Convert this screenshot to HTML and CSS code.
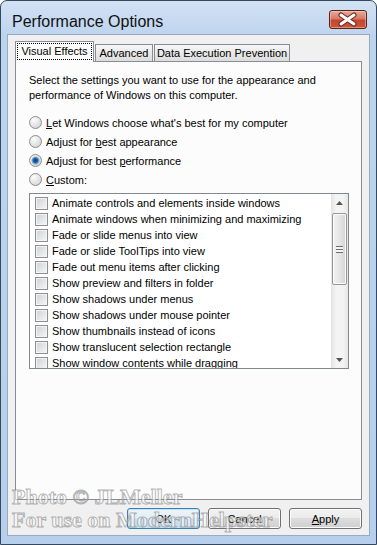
FILE: index.html
```html
<!DOCTYPE html>
<html lang="en">
<head>
    <meta charset="UTF-8">
    <title>Performance Options</title>
    <link rel="stylesheet" href="styles.css">
</head>
<body>
    <div class="window">
        <div class="titlebar">
            <span class="title">Performance Options</span>
            <span class="close">
                <svg width="36" height="17" viewBox="0 0 36 17">
                    <path d="M11 4 L24 13 M24 4 L11 13" stroke="#6e2418" stroke-width="5" stroke-linecap="round"/>
                    <path d="M11 4 L24 13 M24 4 L11 13" stroke="#fff" stroke-width="3" stroke-linecap="round"/>
                </svg>
            </span>
        </div>

        <div class="client">
            <div class="tabs">
                <div class="tab active"><span class="focus">Visual Effects</span></div>
                <div class="tab tab-adv">Advanced</div>
                <div class="tab tab-dep">Data Execution Prevention</div>
            </div>

            <div class="panel">
                <p class="intro">Select the settings you want to use for the appearance and<br>performance of Windows on this computer.</p>

                <div class="options">
                    <div class="radio-row"><span class="radio"></span><span><u>L</u>et Windows choose what's best for my computer</span></div>
                    <div class="radio-row"><span class="radio"></span><span>Adjust for <u>b</u>est appearance</span></div>
                    <div class="radio-row"><span class="radio on"></span><span>Adjust for best <u>p</u>erformance</span></div>
                    <div class="radio-row"><span class="radio"></span><span><u>C</u>ustom:</span></div>
                </div>

                <div class="listbox">
                    <ul class="items" id="effects"></ul>
                    <div class="scrollbar">
                        <div class="arrow">
                            <svg width="7" height="4" viewBox="0 0 7 4"><path d="M0 4 L3.5 0 L7 4 Z" fill="#555"/></svg>
                        </div>
                        <div class="track">
                            <div class="thumb"><span class="grip"></span></div>
                        </div>
                        <div class="arrow">
                            <svg width="7" height="4" viewBox="0 0 7 4"><path d="M0 0 L3.5 4 L7 0 Z" fill="#555"/></svg>
                        </div>
                    </div>
                </div>
            </div>

            <div class="buttons">
                <button class="btn default">OK</button>
                <button class="btn">Cancel</button>
                <button class="btn"><u>A</u>pply</button>
            </div>
        </div>

        <div class="watermark">Photo © JLMeller<br>For use on ModernHelpster</div>
    </div>

    <script>
        const effects = [
            "Animate controls and elements inside windows",
            "Animate windows when minimizing and maximizing",
            "Fade or slide menus into view",
            "Fade or slide ToolTips into view",
            "Fade out menu items after clicking",
            "Show preview and filters in folder",
            "Show shadows under menus",
            "Show shadows under mouse pointer",
            "Show thumbnails instead of icons",
            "Show translucent selection rectangle",
            "Show window contents while dragging"
        ];

        const list = document.getElementById('effects');
        effects.forEach(name => {
            list.innerHTML += `<li><span class="check"></span><span>${name}</span></li>`;
        });
    </script>
</body>
</html>
```

FILE: styles.css
```css
body {
    margin: 0;
    font-family: "Liberation Sans", Arial, sans-serif;
    font-size: 11px;
    color: #000;
}
.window {
    position: relative;
    width: 377px;
    height: 545px;
    box-sizing: border-box;
    border: 1px solid #34495f;
    border-radius: 7px 7px 0 0;
    padding: 0 6px 8px 6px;
    background: linear-gradient(#d3e2f4, #bed4ee 34px, #b7cfec);
    display: flex;
    flex-direction: column;
}
.titlebar {
    height: 33px;
    display: flex;
    justify-content: space-between;
    align-items: flex-start;
}
.title {
    margin: 13px 0 0 5px;
    font-size: 16px;
    line-height: 16px;
    color: #111;
}
.close {
    margin: 9px 3px 0 0;
    width: 36px;
    height: 17px;
    border: 1px solid #5e2016;
    border-radius: 3px;
    background: linear-gradient(#e3ab9c, #d57b66 45%, #c5462c 55%, #c9573b);
    box-shadow: inset 0 0 0 1px rgba(255, 220, 210, 0.45);
}
.close svg {
    display: block;
}
.client {
    flex: 1;
    background: #f0f0f0;
    border: 1px solid #98abc3;
    padding: 6px 7px 6px 7px;
    display: flex;
    flex-direction: column;
}
.tabs {
    height: 20px;
    display: flex;
    align-items: flex-end;
    gap: 1px;
}
.tab {
    height: 17px;
    box-sizing: border-box;
    border: 1px solid #898c95;
    border-bottom: none;
    background: linear-gradient(#f7f7f7, #e9e9e9 50%, #dcdcdc);
    text-align: center;
    line-height: 16px;
}
.tab-adv {
    width: 58px;
}
.tab-dep {
    width: 136px;
}
.tab.active {
    width: 79px;
    height: 21px;
    margin-bottom: -1px;
    padding: 1px;
    background: #fcfcfc;
    position: relative;
    z-index: 1;
}
.focus {
    display: block;
    height: 17px;
    box-sizing: border-box;
    border: 1px dotted #000;
    line-height: 15px;
}
.panel {
    height: 439px;
    box-sizing: border-box;
    border: 1px solid #898c95;
    background: #fcfcfc;
    padding: 11px 12px 0 13px;
}
.intro {
    margin: 0 0 10px 0;
    line-height: 15px;
}
.radio-row {
    height: 19px;
    display: flex;
    align-items: center;
    gap: 4px;
}
.radio {
    width: 13px;
    height: 13px;
    box-sizing: border-box;
    border-radius: 50%;
    border: 1px solid #8c8e90;
    background: radial-gradient(circle at 35% 30%, #fdfdfd, #e2e2e2 55%, #c8c8c8);
}
.radio.on {
    background:
        radial-gradient(circle, #143f7c 0, #1f5aa0 2px, #7eb0e0 3.5px, rgba(200, 222, 244, 0) 4.5px),
        radial-gradient(circle at 35% 30%, #fdfdfd, #e2e2e2 55%, #c8c8c8);
}
.listbox {
    margin-top: 4px;
    height: 176px;
    box-sizing: border-box;
    border: 1px solid #828790;
    background: #fff;
    display: flex;
    overflow: hidden;
}
.items {
    flex: 1;
    margin: 0;
    padding: 1px 0 0 0;
    list-style: none;
}
.items li {
    height: 16px;
    display: flex;
    align-items: center;
    gap: 4px;
    padding-left: 5px;
    white-space: nowrap;
}
.check {
    width: 13px;
    height: 13px;
    box-sizing: border-box;
    border: 1px solid #8e8f8f;
    background: linear-gradient(135deg, #cfd1d4, #f7f7f7);
    box-shadow: inset 0 0 0 1px #f4f4f4;
}
.scrollbar {
    width: 17px;
    display: flex;
    flex-direction: column;
    background: linear-gradient(90deg, #e4e4e4, #f4f4f4 30%, #f4f4f4 70%, #e6e6e6);
}
.arrow {
    height: 17px;
    display: flex;
    align-items: center;
    justify-content: center;
}
.track {
    flex: 1;
    padding-top: 2px;
}
.thumb {
    margin: 0 1px;
    height: 72px;
    box-sizing: border-box;
    border: 1px solid #979797;
    border-radius: 2px;
    background: linear-gradient(90deg, #f2f2f2, #e6e6e6 50%, #d4d4d4);
    box-shadow: inset 0 0 0 1px #fbfbfb;
    display: flex;
    align-items: center;
    justify-content: center;
}
.grip {
    width: 7px;
    height: 7px;
    background: repeating-linear-gradient(#6f6f6f 0 1px, #f4f4f4 1px 3px);
}
.buttons {
    margin-top: 8px;
    display: flex;
    justify-content: flex-end;
    gap: 8px;
}
.btn {
    width: 73px;
    height: 21px;
    border: 1px solid #707070;
    border-radius: 3px;
    background: linear-gradient(#f2f2f2, #ebebeb 50%, #dddddd 50%, #cfcfcf);
    box-shadow: inset 0 0 0 1px #fcfcfc;
    font-family: "Liberation Sans", Arial, sans-serif;
    font-size: 11px;
    color: #000;
    padding: 0;
}
.btn.default {
    border-color: #3c7fb1;
    background: linear-gradient(#eef5fa, #e2edf5 50%, #cfe0ee 50%, #c6dbec);
    box-shadow: inset 0 0 0 1px #bfe3f7;
}
.watermark {
    position: absolute;
    left: 11px;
    top: 484px;
    font-family: "Liberation Serif", serif;
    font-weight: bold;
    font-size: 22px;
    line-height: 23px;
    color: rgba(255, 255, 255, 0.6);
    -webkit-text-stroke: 1px rgba(110, 110, 110, 0.5);
    white-space: nowrap;
    pointer-events: none;
}
```
